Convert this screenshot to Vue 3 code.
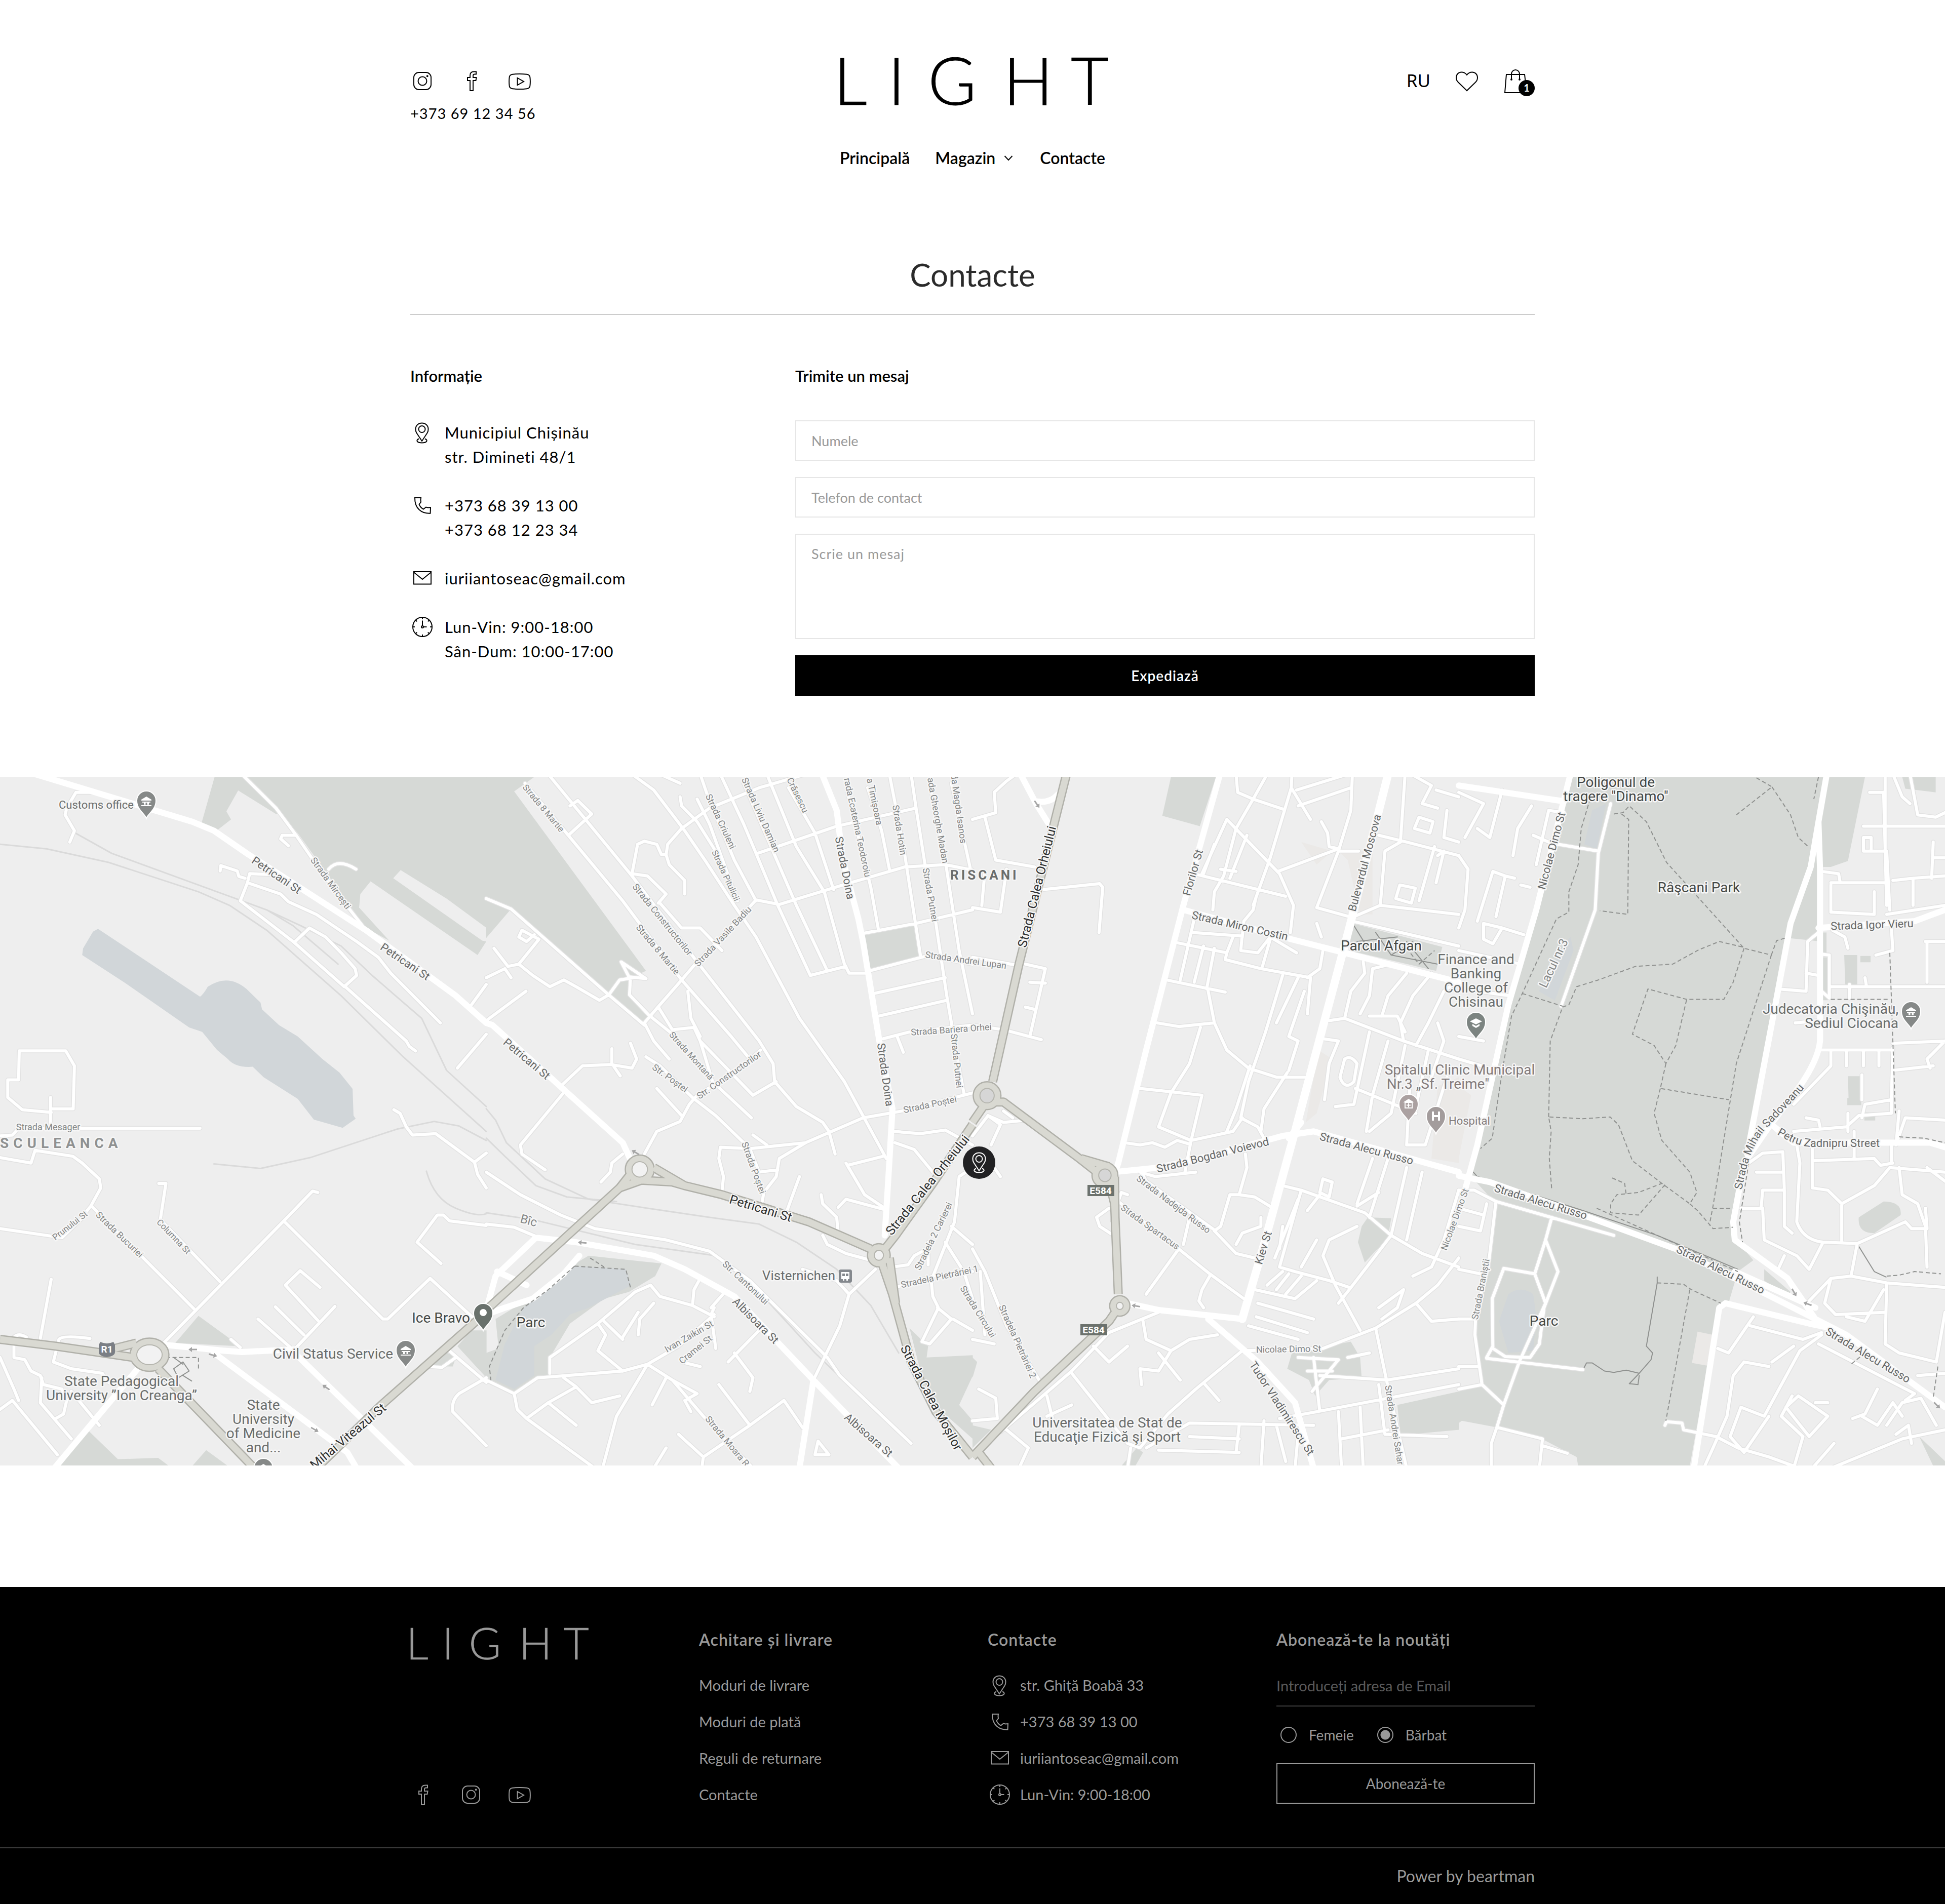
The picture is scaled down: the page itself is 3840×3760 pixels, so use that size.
<script setup>
import { ref } from 'vue'

const name = ref('')
const phone = ref('')
const message = ref('')
const email = ref('')
const gender = ref('m')

const icons = {
  instagram: '<rect x="7" y="7" width="34" height="34" rx="10"/><circle cx="24" cy="24" r="8.5"/><circle cx="33.7" cy="14.3" r="1" />',
  facebook: '<path d="M34 5.5V10.5H31C29 10.5 28 11.5 28 13.5V17H34.5L33.5 23H28V43H22V23H17V17H22V13C22 8 25 5.5 29.5 5.5Z"/>',
  youtube: '<path d="M10 10.8Q24 9 38 10.8Q43.5 11.5 44.3 16Q45.5 25 44.3 34Q43.5 38.5 38 39.2Q24 41 10 39.2Q4.5 38.5 3.7 34Q2.5 25 3.7 16Q4.5 11.5 10 10.8ZM19.5 18V32L32 25Z"/>',
  heart: '<path d="M24 12C27 8 31 6.5 34.5 6.5C41 6.5 45 11.5 45 17.5C45 21.5 43.5 24 41 26.5L24 43L7 26.5C4.5 24 3 21.5 3 17.5C3 11.5 7 6.5 13.5 6.5C17 6.5 21 8 24 12Z"/>',
  bag: '<path d="M6 11H42L46 47H3Z"/><path d="M16 21V10a8 8 0 0 1 16 0V21"/><circle cx="16" cy="21" r="1"/><circle cx="32" cy="21" r="1"/>',
  pin: '<path d="M23 41L12.5 25C10.5 22 10.5 19 10.5 17.5C10.5 10 16 5.5 23 5.5S35.5 10 35.5 17.5C35.5 19 35.5 22 33.5 25Z"/><circle cx="23" cy="17.5" r="6.5"/><path d="M17 36.500C10 39.500 13.500 44.500 23 44.500S36 39.500 29 36.500"/>',
  phone: '<path d="M9 9H21L20.500 13L21 17.500L17.500 22C18.500 25.500 22.500 30 26 31.500L31 27.500L35 28.500L40 28L39.500 39.800C22 40.500 8.500 30 9 9Z"/>',
  mail: '<path d="M7 11H41V35.500H7Z"/><path d="M7.500 12.500L24 26L40.500 12.500"/>',
  clock: '<circle cx="24" cy="24" r="19"/><circle cx="24" cy="24" r="2"/><path d="M24 22V11.500M26 24H32.500M24 5V9M24 39V43M5 24H9M39 24H43M11 11L13.200 13.200M37 11L34.800 13.200M11 37L13.200 34.800M37 37L34.800 34.800"/>',
}

const headerSocial = [
  { icon: 'instagram', label: 'Instagram' },
  { icon: 'facebook', label: 'Facebook' },
  { icon: 'youtube', label: 'YouTube' },
]
const footerSocial = [headerSocial[1], headerSocial[0], headerSocial[2]]

const info = [
  { icon: 'pin', lines: ['Municipiul Chișinău', 'str. Dimineti 48/1'] },
  { icon: 'phone', lines: ['+373 68 39 13 00', '+373 68 12 23 34'] },
  { icon: 'mail', lines: ['iuriiantoseac@gmail.com'] },
  { icon: 'clock', lines: ['Lun-Vin: 9:00-18:00', 'Sân-Dum: 10:00-17:00'] },
]
const footerLinks = ['Moduri de livrare', 'Moduri de plată', 'Reguli de returnare', 'Contacte']
const footerInfo = [
  { icon: 'pin', text: 'str. Ghiță Boabă 33' },
  { icon: 'phone', text: '+373 68 39 13 00' },
  { icon: 'mail', text: 'iuriiantoseac@gmail.com' },
  { icon: 'clock', text: 'Lun-Vin: 9:00-18:00' },
]

/* The map is split in four sheets of 960 units, each with its own drawing grid. */
const SX = 0.61224
const SY = 0.89286
const TOP = -14
const sheetTransform = (i) => `translate(${i * 960} ${TOP}) scale(${SX} ${SY})`

const sheets = [
  {
    park: 'M692 16L650 118L700 134L745 110L730 92L768 46L890 98L905 95L800 16ZM800 16L960 140L1180 350L1255 378L1158 305L1162 275L1195 247L1540 410L1568 380L1555 378L1268 240L1292 222L1440 285L1569 350V16ZM640 1208L565 1268L775 1275ZM285 1462L195 1540H545L510 1522L380 1525ZM665 1505L620 1540H735ZM1475 1275L1569 1345V1240L1520 1240ZM1380 1320L1460 1320L1470 1300L1430 1285Z',
    light: '',
    water: 'M316 352L645 502Q655 498 670 480Q735 450 795 485L840 515L845 530L900 565L960 590L1040 640L1095 670L1137 706L1140 765L1147 772L1105 792L1012 774L960 728L850 680L815 657Q760 660 735 640L700 620L652 580L610 570L400 470L265 410L268 395L300 358Z',
    rail: 'M0 165L150 175L350 205L640 270L740 300L860 355L1100 500L1300 635L1568 800M235 137L360 185L700 270L860 310L970 345L1100 390L1200 455L1360 550L1440 665L1568 745M860 310L945 345L1090 430M690 872L840 882L1000 858L1280 795L1400 778L1480 788L1568 820M1375 888Q1400 950 1470 970T1568 982',
    minor: 'M300 50H245L215 85L210 100L240 135L225 160M710 224L712 212L765 224L770 236L790 240M880 232L805 230L798 250L775 290L945 380L1110 480L1150 455L1145 440L1100 405L1050 370L998 350L952 380M798 250L905 275L930 292L1020 320L1150 380L1220 415L1260 450L1420 560M1110 478L1310 600L1320 612L1340 622M780 10L890 85L955 145L1000 190L1100 285L1180 355M955 145H910L905 153L930 168M1060 220Q1090 195 1148 220M1475 660L1568 585M1515 525L1568 475M62 622H212L240 655L236 750H165M62 622L60 686H25V725L72 752L165 758M163 725V785M0 810L40 808L60 793H645M0 858L100 870L113 842L235 855L265 870L320 905L325 925L293 965L275 980M295 965L625 1192M0 1015L200 1035L275 985M512 915H535L517 995L709 1132M1025 935L1008 932L915 998L525 1270M915 998L1235 1215L1250 1215L1387 1125L1530 1215M832 1215L940 1280M888 1188L980 1250M1080 1187L955 1278M1032 1145L968 1108L920 1140L1025 1218M1422 1092L1345 1045L1410 985L1430 985L1450 998L1568 1008M1270 752L1290 760L1310 790L1330 808L1405 805L1530 868L1568 848M1530 868L1540 895L1568 925M1440 1280L1568 1355M1568 1345L1480 1380Q1455 1395 1460 1420L1568 1495M1380 1320L1425 1322L1470 1300M165 1127L130 1258M45 1255Q60 1245 85 1255M45 1260V1300L80 1305L100 1330L130 1340L140 1360L200 1370L215 1395L205 1425L180 1435M135 1345L130 1400L230 1480M190 1260Q200 1250 290 1258M190 1260L172 1310L230 1325L330 1335L350 1355M0 1300L45 1370L60 1395M0 1415L40 1395L185 1515M230 1375L320 1450M745 1260L775 1278',
    major: 'M90 5L620 115L690 135L800 187L1180 355L1470 500L1568 560M530 1272L720 1285L780 1288L950 1282M690 1290L1120 1510L1150 1545M950 1290L1330 1545M450 1320L175 1545',
    avenue: '',
    highway: 'M0 1260L180 1275L430 1300M370 1280L440 1268M510 1325L820 1545M1568 1200L1230 1405L1020 1545',
    rings: [{ x: 482, y: 1294, rx: 50, ry: 28, open: true }],
    dash: 'M535 1300H640V1330',
    path: 'M560 1325L590 1310L610 1330L575 1345ZM560 1300L590 1315M590 1340L618 1352',
  },
  {
    park: 'M0 16H155L90 48L515 445L460 462L465 500L525 543L505 565L80 308L0 372ZM1215 367L1385 343L1402 415L1238 442ZM330 1075L565 1092L545 1120L460 1155L380 1170L270 1225L205 1300V1345L155 1345L95 1380L0 1350V1290L40 1280L30 1215L90 1190L130 1180L280 1095ZM1365 1235L1425 1275L1420 1300L1569 1295V1340L1525 1405L1569 1440V1480L1470 1420L1400 1330Z',
    light: '',
    water: 'M285 1098L450 1105L468 1140L330 1190L270 1205L210 1250L155 1275V1340L90 1370L30 1350L60 1270L120 1190L180 1160L240 1130Z',
    rail: 'M0 750L30 775L65 825L190 905L330 950L520 970L720 990L880 1005L1000 1045L1130 1105L1240 1185L1330 1290M0 815L60 855L160 920L260 945L420 955M0 980L150 995L480 1050L740 1075L860 1140L1060 1290L1350 1480',
    minor: 'M125 30L440 290L630 465L790 590L850 640M200 10L470 235L680 425L880 600L925 650L930 690L1000 745L1085 780L1105 800L1125 850M470 10L540 45L640 135L710 205L800 300L870 370L1010 550L1155 690L1290 860M560 10L625 30M625 60L630 80L680 115L735 175M680 65L720 120L810 290M690 10L715 60L800 200L870 290M755 10L830 120L870 185L940 300L1045 455M830 30L1000 300L1100 445M905 10L1000 170L1090 270L1155 430L1170 450L1225 450M975 40L1060 140L1120 265M470 230L488 165L510 158L550 165L565 188L580 188L585 165L630 130L720 85L880 40L1020 12M580 188L590 210L640 245V275M470 230L520 235L580 275L555 295M560 295L630 350L690 350L760 400M875 185L1130 125L1385 85M510 560L560 520L630 465L680 425L800 340L870 288L945 298L1150 255L1350 215L1480 210L1568 222M1045 455L1160 435M1215 362L1385 340L1568 310M1235 445L1420 412L1568 430M1250 495L1480 460M1265 545L1485 510M1280 595L1365 580L1568 565M1325 590L1345 625M1165 50L1190 120L1240 260L1265 355M1230 40L1275 135L1300 220M1300 10L1320 80L1350 190L1400 410M1370 10L1385 80L1415 210L1450 340L1485 500L1520 640L1540 715M1430 30L1480 200L1525 400L1568 540M1500 30L1568 240M1568 715L1340 755L1215 770L1030 825L850 838L755 835L750 860L765 900L760 935M860 808L905 830M515 635L560 655L665 725L740 765L850 838M550 705L630 765M510 850L550 800L625 778L655 740L680 720L800 670L885 620M850 838L880 890L940 885M1030 825L945 860L935 900L895 935L890 955M510 560L540 600L590 640M555 525L600 575L670 570L690 600L860 720L935 690M650 490L660 550L690 590M690 600L730 690L855 770M0 285L80 308L395 498L510 565M395 498L430 465L475 460M465 462L462 498L525 543L610 590M435 425L515 462L460 458ZM395 498L365 510L290 480L250 465L205 480L150 455L105 430L170 375M105 430L70 435L25 395M170 375L115 355L105 370L130 380L155 365M0 460L60 440L80 460M0 555L128 490M240 700L310 655L400 652L470 660L485 640L465 605M405 617V650L432 677M255 710L110 830L115 850L190 885M370 912L400 890L405 870L440 850M265 145L340 98L295 68L270 80M1010 900L970 975M1080 940L1085 960L1130 990L1135 1025M1085 1030L1100 1050L1160 1070L1240 1085M1135 968L1160 950L1280 972M1165 875L1280 855M1160 870L1220 940L1285 970M1315 800L1400 805L1480 797L1568 830M1318 825L1380 840L1440 890M1310 1100L1360 1095L1380 1075L1420 1060M1568 880L1525 900L1510 1000L1435 1130L1440 1165L1458 1190L1405 1265L1430 1270L1500 1215L1455 1190M1425 1045V1095M1320 1145L1440 1120L1568 1110M1500 1010L1568 1050M1480 1045L1540 1110L1568 1170M1505 1215L1568 1240M0 890L110 940L240 985L350 1015L580 1040L720 1065L850 1130L1100 1300L1140 1340L1370 1490M0 1005L90 1012L170 1035M1255 1105L1170 1160L1140 1230L1055 1350M1170 1160L1130 1130L1020 1105M0 1350L90 1380L165 1345L350 1335L440 1330L520 1315L600 1350L700 1430L860 1545M520 1315L420 1430L375 1545M520 1315L620 1275L735 1205M205 1335V1300L360 1225L480 1155L530 1140L560 1165L665 1185L735 1210M360 1225L385 1250L360 1285L440 1330M90 1380L100 1415L130 1435L200 1400L290 1365L340 1400L430 1385M130 1435L350 1545M200 1400L290 1450M250 1345L290 1365M440 1255L490 1200M490 1250L495 1215L540 1180M380 1220L440 1260M665 1185L670 1150L690 1125M735 1190L725 1205L740 1280M770 1155L725 1190M535 1405L580 1345M600 1350L680 1380L640 1395L660 1420M690 1320L630 1310M780 1310L880 1240M800 1290L860 1345L850 1375M750 1360L850 1450L960 1395L1020 1455M850 1450L700 1520L695 1545M620 1470L700 1520M580 1500L540 1545M1060 1515L1070 1485L1105 1515Z',
    major: 'M0 560L20 565L440 825L470 870M1080 5L1130 90L1150 200L1200 330L1215 380L1270 610L1310 750L1297 900L1285 1030M0 1205L60 1190L150 1170L250 1115L300 1075M160 1035L290 1045L540 1075L640 1105L800 1165L1055 1350L1330 1545M1055 1350L1010 1545M0 1195L30 1120L160 1035M35 1110L130 1140',
    avenue: '',
    highway: 'M1568 785L1440 915L1320 1030L1268 1075M0 1195L430 925L470 890M540 880L640 920L760 940L1040 1000L1190 1045L1240 1060M430 925L500 908L600 912L640 920M1268 1075L1310 1160L1370 1310L1450 1420L1568 1520M1300 1080L1320 1180',
    rings: [{ x: 495, y: 884, rx: 34, ry: 23, open: true }, { x: 1266, y: 1074, rx: 24, ry: 17, open: true }],
    dash: 'M285 1098L450 1105L465 1145M285 1098L200 1150L120 1190L60 1240L10 1320L15 1350M335 1080L380 1100',
    path: '',
  },
  {
    park: 'M640 16L612 102L733 125L785 16ZM1225 340L1420 375L1515 392L1495 445L1215 400ZM1255 1010L1275 990L1350 992L1340 1035L1265 1090L1243 1045ZM1030 1290L1220 1265L1250 1300L1255 1345L1150 1350L1105 1385L1085 1350L1015 1325ZM1370 1405L1569 1375V1460L1380 1472ZM0 1300L15 1310L0 1345ZM0 1450L60 1460L0 1500ZM530 1500L480 1540H525L550 1510Z',
    light: 'M1180 180L1290 180L1290 320L1250 320L1210 200ZM1115 620L1160 640L1110 760L1075 780ZM1500 700L1568 680V870L1480 860ZM1060 160L1160 180L1110 210Z',
    water: '',
    rail: '',
    minor: 'M0 110L75 95L70 50L110 25L140 10M40 105L75 200L200 215M0 305L90 315L110 220M40 225L30 300M230 265L410 252L420 260L408 360M170 430L235 440L185 590M185 470L235 472M170 525L200 530M0 565L100 575L222 597M0 415L140 432M0 810L50 765L100 780L175 775M50 765L90 785L60 830M60 870L90 900M100 755L130 770M820 110L990 230L1035 300L1025 360M820 110L740 230M780 165L745 230M885 145L830 240M725 232L1010 280M800 220L850 225M850 10L855 50L905 65L1005 88M950 10L905 65L850 130L810 235L780 270L775 310M1030 10L1028 40L960 195L905 300M1028 40L1090 110M1045 45L1200 12M1225 10L1220 90L1180 180L1245 180M1050 80L1220 40M985 225L1180 175L1150 170L1145 140L1125 115M1180 180L1110 305L1215 325M1310 145L1400 160L1568 190M1395 10L1380 160L1330 180L1315 300L1230 325M1315 300L1568 320M1415 10L1480 35L1450 75L1500 85M1440 105L1485 115L1475 140L1425 130ZM1378 255L1428 262L1415 295L1365 285ZM1495 45L1568 60M1530 90L1520 150L1568 160M1490 170L1440 290M1500 190L1520 180L1495 250M1225 335L1568 390M715 330L670 465M655 382L820 405M745 390L715 470M780 395L755 485M710 360L870 368M870 365L865 400L920 405L960 370L1045 405M820 405L840 370M960 375L935 435M915 280L905 310L875 335L870 370M625 465L815 492M820 405L815 420L930 440L1090 460L1080 540M1000 455L945 580L890 690L865 770L920 790L940 815M760 490L780 560L820 620L890 660L980 680L1075 680M595 560L665 568L780 560M735 570L700 650L640 715L600 790L705 820L840 800L870 770M540 705L740 720L705 820L685 890M895 655L850 750L820 800M1015 670L940 750L930 800M1070 490L1020 590L1050 600L1020 665M1050 460L980 560M1110 340L1125 370M1130 400L1120 440L1080 460M490 825L540 830L580 825L620 835L660 820L700 828M540 890L590 900L720 890M880 850L885 880L860 940L910 945L970 970M860 940L830 940L800 1010L780 1020L850 1070L910 1080M850 1050L870 1025L930 1010L930 990M470 955L665 1060L765 1115L875 1170M665 1060L560 1160M700 990L680 1050M470 955L480 935L500 940M440 970L400 990L410 1010L455 1030M765 1120L740 1150L730 1175L745 1190M545 890L560 910L780 1018M1150 555L1200 550L1390 600L1568 640M1200 550L1220 490L1265 450L1260 425M1250 540L1280 500L1290 440L1350 430M1320 545L1340 500L1400 450M1390 600L1380 560L1420 500L1480 450M1430 610L1470 560L1520 490L1560 470M1280 545L1370 545L1395 580M1130 595L1180 600L1150 650L1135 730M1200 640Q1220 630 1240 650L1230 690Q1200 710 1185 680ZM1280 580L1230 740L1170 745M1235 705L1430 760M1340 600L1290 720L1270 800M1395 610L1350 760L1280 800M1470 620L1425 760M1410 700L1400 830L1460 830L1530 680M1500 560L1520 600L1470 700M1000 920L1060 930L1265 980L1350 1030L1450 1070L1568 1100M1130 905L1160 912L1150 945L1120 935ZM1080 975L1120 940M1240 960L1290 860M1350 1030L1400 880M1450 890L1400 1040M1340 860L1280 990M1060 930L990 1100L1040 1110L1150 1130L1215 1145M1240 1010L1150 1040L1130 1075L1170 1140L1250 1240M1350 1030L1215 1150L1180 1180M910 1150L1040 1170L1110 1130M920 1180L1100 1215M915 1210L1080 1245M890 1230L1050 1260M880 1285L1130 1280L1300 1235L1430 1180L1500 1140L1568 1080M1430 1180L1480 1220L1568 1215M1000 1110L950 1140M1020 1115L980 1150M1060 1120L1010 1160M1110 1040L1060 1100M1000 1010L990 1060M1050 950L975 1080M1310 935L1240 965M1420 1120L1480 1100L1520 1040L1568 930M1310 1190L1390 1150L1370 1190L1320 1215M1300 1235L1335 1350L1400 1545M1120 1340L1335 1350L1568 1325M990 1435L1110 1420L1340 1390L1568 1360M1100 1300L1120 1420M1080 1330L1160 1330M1210 1300L1280 1290M1050 1300L1180 1305L1095 1375M320 1335L500 1490L540 1500L630 1425L720 1370L870 1285M90 1465L320 1330L440 1245L600 1200M240 1385L260 1440M390 1275L440 1310L500 1275M550 1220L560 1260L640 1285L700 1260L790 1250M640 1285L600 1330L540 1325L545 1360M600 1290L670 1350M240 1430L320 1405M110 1460L180 1500L150 1545M750 1360L795 1395M510 1500L500 1545M560 1500L700 1445L1100 1450M700 1475L860 1480M860 1450L850 1510M600 1505L860 1510M940 1440L930 1545M980 1450L1010 1530M1050 1470L1040 1545M1180 1420L1190 1545M1250 1410L1260 1545M1190 1480L1340 1460M1310 1360L1330 1470L1530 1475M20 1370L75 1390L80 1435L0 1440M0 1060L40 1110L110 1230L215 1350M25 1110L40 1250M0 1260L70 1270',
    major: 'M800 5L680 300L560 620L470 870L460 890M455 890L600 880L760 855L1000 810L1100 800L1568 890M680 310L1000 370L1200 405L1568 470M500 1180L600 1195L870 1215M760 1215L920 1310L1040 1400L1100 1545M155 10L205 75L255 130M205 70Q250 75 275 55M1020 815L1060 780',
    avenue: 'M1342 5L1215 350L1040 800L940 1050L870 1215',
    highway: 'M305 5L150 430L65 690M60 735L100 735L345 860L410 895M440 910L458 960L470 1160M460 1200L440 1220L200 1375L0 1520M40 740L0 780M20 1510L60 1545M350 860L440 878M458 900L460 1000',
    rings: [{ x: 47, y: 721, rx: 32, ry: 22 }, { x: 427, y: 897, rx: 29, ry: 20 }, { x: 475, y: 1186, rx: 20, ry: 14, open: true }],
    dash: 'M1400 395L1440 430L1490 400',
    path: 'M1230 345L1280 400M1240 380L1370 370M1300 360L1350 410L1420 380M1400 380L1470 440M1350 410L1500 430',
  },
  {
    park: 'M365 16L1310 16L1255 202L1200 215L1175 215L1168 380L1060 372L950 800L885 1000L895 1040L950 1085L900 1110L870 1180L840 1180L745 1540H385L380 1520L240 1470L125 1455L10 1440L0 1445V1375L75 1360L50 1240L120 960L40 900L170 520ZM1168 360h18v45h-18ZM1168 415h22v95h-18ZM1243 410h42v75h-38ZM1295 412h33v14h-33ZM1255 678h40v48h-38ZM1253 726h45v16h-45ZM1308 758h35v18h-35ZM1290 990L1370 955Q1430 955 1425 985L1340 1025Q1285 1025 1290 990ZM1430 16H1538V50L1440 42ZM1485 1475L1569 1530V1540H1530ZM985 1105L1070 1155L1060 1165L985 1130Z',
    light: 'M770 1243L820 1250L800 1318L752 1312ZM0 700L40 720L0 860Z',
    water: 'M430 90L475 75L445 175L405 165ZM335 390L360 370L370 400L310 510L258 490ZM160 1160Q200 1140 240 1160L250 1210L240 1285L160 1290L130 1220Z',
    rail: '',
    minor: 'M490 75L450 185L440 310L330 523M320 165L450 180M120 955L95 1100L55 1200L52 1250L75 1360L145 1405L125 1450L105 1490V1545M0 1370L75 1360M0 930L50 930L120 955L500 1030M300 990L280 1040L245 1115L145 1103L108 1170L110 1280L150 1298L230 1300L260 1270L275 1190L320 1110L280 1040M245 1115L280 1180L195 1310L145 1405M90 1302L400 1327M110 1275L90 1300M125 1455L270 1480L260 1545M270 1495L350 1512M665 1450L670 1442L720 1445L725 1460L830 1475M0 50L80 75L20 150M235 80L190 130L175 190M140 45L100 150L60 130M0 190L30 220L20 310L0 350M60 335L110 225L150 235L120 325M150 235L180 240M200 255L230 260M80 340L140 350L110 385L80 375ZM140 350L210 365M240 145L290 160M250 210L290 90L340 95M0 400L200 430M165 500L60 490M0 590L80 600M0 640L100 660M0 1010L70 1020L90 960M0 970L80 985M0 1105L70 1115M0 1215H50M0 1320L65 1320M1200 250H1385M1170 225L1225 230L1230 250M1200 255V315L1340 320V270M1325 50H1370L1380 300M1305 125L1568 125M1375 10V180L1305 180V150H1330V175M1380 180L1390 310M1380 320L1568 300M1400 245L1465 240V300M1465 240L1568 235M1530 160L1525 240M1455 10L1480 100L1538 105L1568 95M1400 10L1430 60L1455 75M1530 195H1568M1030 485L1120 490L1125 380L1160 360M1120 450L1160 455M1085 560L1160 555M1170 490L1195 505V410L1170 408M1200 480H1568M1505 380H1568M1510 380V470M1395 350L1400 400L1345 410M1205 355L1245 370L1255 395M1260 475V505M1310 460L1315 480M1165 620L1400 620M1400 605L1568 600M1200 625V655L1080 740M1250 625V655M1305 622V655M1355 620V655M1400 615L1395 730L1310 740L1300 770M1300 675V730M1255 760V800M1400 665L1530 655M1568 600L1510 640L1520 660M1080 800L1250 790L1290 765L1395 760V720M1120 770L1160 775L1165 790M1275 800V860M1395 830V870M1420 755L1410 830L1440 770L1568 775M910 970H980L985 1040L1090 1075L1130 1105L1175 1045M935 870L980 848L1045 845L1050 930L980 930M960 890H1045M980 930L975 970M1050 930V1010L1075 1025M1090 830L1100 870L1090 1000Q1110 1040 1175 1045L1285 1048L1440 1000L1460 1015L1510 1015L1505 970M1140 830V925L1190 930L1235 960L1340 920L1390 880L1568 890M1140 865L1340 860L1360 875L1400 870M1235 960V1045M1285 1048L1265 1120L1200 1125L1130 1175M1265 1120L1380 1135L1568 1145M1380 1135L1375 1270L1420 1290L1540 1310L1568 1200M1420 880L1430 940L1480 960L1505 1010L1510 1100M1200 1125L1180 1180L1215 1205L1375 1200M1510 880L1568 910M1050 1075L1030 1105M835 1280L870 1290L950 1210M940 1230L1110 1260L1170 1245M1160 1270L1470 1380L1440 1395M1170 1250L1100 1285L985 1430L910 1410L875 1475L920 1510L1000 1430M1010 1310L1080 1275M920 1310L885 1340L865 1430L820 1500L790 1545M920 1310L1000 1320M1055 1410L1095 1385L1190 1430L1130 1475ZM1075 1385L1040 1430L1110 1475L1080 1545M1190 1400L1150 1400M830 1475L900 1500L1000 1520L1100 1545M1270 1435L1310 1425L1350 1370M1300 1430L1350 1450L1400 1400L1430 1430M1380 1450L1430 1400L1490 1390L1540 1450M1410 1470L1450 1450L1460 1490M1200 1545L1430 1480L1568 1460M1140 1545L1210 1490M1250 1210L1310 1220L1370 1150M1480 1340L1568 1335',
    major: 'M362 5L250 310L160 520L60 830L20 930M0 898L100 912L400 985L700 1060L1050 1180L1250 1250L1568 1410M0 35L340 70M1188 5L1160 115L1135 215L1070 340L1010 560L930 850M1160 115L1165 220V600Q1160 640 1100 700L1000 790L920 870L885 1000L890 1040L1060 1125L1150 1215L1250 1250M1160 350L1470 335L1568 310M1000 780L1080 825L1400 825L1520 825L1568 835M758 1545L840 1190L860 1180L1130 1225L1200 1235M890 1110L1150 1190',
    avenue: '',
    highway: '',
    rings: [],
    dash: 'M500 98L530 95L550 80L605 115L670 205L920 395L1008 410M525 98L548 110L545 320L455 312M1008 410L895 650L820 965L808 1008M1008 410L1025 378L1055 372M920 395L885 470L855 508H735L610 485L560 585L630 610L668 650L700 610L735 508M668 650L650 705L872 730M650 705L630 760L655 820L745 890L768 935L745 960L655 915L560 865L515 785L488 768L400 772L290 768L298 800L292 860L300 930M290 768L295 600L335 525L355 520L380 480L450 465L570 435L690 430L775 398L840 380L920 393M205 495L335 523M430 50L395 130L385 210L355 270V315L315 330L205 495L170 545L135 690L108 815L70 838M895 100L1010 38L955 16M1010 38L1070 100L1095 150L1130 172M1160 16L1145 65M745 960L770 975L820 1015L885 1012M820 970H885M665 918L580 985L490 980V960L510 940L580 935L655 915M495 903L535 915L540 940M445 970L510 990L900 1110M640 1135L725 1138L750 1150L845 1180M745 1150L668 1440M935 870L905 1000L915 1045M1390 405L1408 760M1200 508H1390M1380 1120L1420 1118L1470 1110L1555 1115M1545 1320L1530 1390M1420 812L1500 815L1568 825M1310 1290L1265 1315',
    path: 'M40 885L60 900L400 975L640 1030L900 1105M640 1122V1135L605 1275L625 1290L620 1305L582 1335L540 1328L500 1333L470 1330L430 1312H412L400 1328M582 1335L550 1358L578 1360L582 1340M1288 1052L1340 1110L1378 1122',
  },
]

/* Street names: sheet, start and end of the line they follow, name, rank. */
const streets = [
  [0, 815, 198, 968, 268, 'Petricani St', 'mid'],
  [0, 1232, 390, 1382, 460, 'Petricani St', 'mid'],
  [0, 1008, 196, 1124, 306, 'Strada Mircești', 'soft'],
  [0, 62, 791, 248, 791, 'Strada Mesager', 'soft'],
  [0, 178, 1034, 274, 982, 'Prunului St', 'tiny'],
  [0, 314, 980, 458, 1076, 'Strada Bucuriei', 'soft'],
  [0, 514, 1000, 608, 1066, 'Columna St', 'tiny'],
  [0, 1008, 1540, 1235, 1408, 'Mihai Viteazul St', 'dark'],
  [1, 128, 38, 242, 132, 'Strada 8 Martie', 'tiny'],
  [1, 478, 254, 660, 408, 'Strada Constructorilor', 'soft'],
  [1, 490, 345, 618, 450, 'Strada 8 Martie', 'soft'],
  [1, 675, 432, 852, 304, 'Strada Vasile Badiu', 'soft'],
  [1, 714, 52, 798, 176, 'Strada Criuleni', 'soft'],
  [1, 736, 180, 808, 288, 'Strada Pitulicii', 'tiny'],
  [1, 832, 20, 938, 180, 'Strada Liviu Damian', 'soft'],
  [1, 978, 20, 1030, 92, 'Crăsescu', 'soft'],
  [1, 1136, 148, 1176, 286, 'Strada Doina', 'mid'],
  [1, 1164, 20, 1232, 236, 'rada Ecaterina Teodoroiu', 'soft'],
  [1, 1236, 20, 1268, 122, 'a Timișoara', 'soft'],
  [1, 1320, 78, 1346, 188, 'Strada Hotin', 'soft'],
  [1, 1434, 20, 1480, 204, 'ada Gheorghe Madan', 'soft'],
  [1, 1510, 20, 1538, 152, 'da Magda Isanos', 'soft'],
  [1, 1418, 218, 1448, 336, 'Strada Putnei', 'soft'],
  [1, 1418, 408, 1676, 434, 'Strada Andrei Lupan', 'soft'],
  [1, 1370, 580, 1630, 568, 'Strada Bariera Orhei', 'soft'],
  [1, 1508, 584, 1526, 704, 'Strada Putnei', 'soft'],
  [1, 1345, 752, 1516, 728, 'Strada Poștei', 'soft'],
  [1, 1272, 604, 1302, 744, 'Strada Doina', 'mid'],
  [1, 58, 598, 202, 680, 'Petricani St', 'mid'],
  [1, 538, 655, 648, 710, 'Str. Poștei', 'soft'],
  [1, 600, 586, 724, 680, 'Strada Montană', 'tiny'],
  [1, 680, 724, 884, 626, 'Str. Constructorilor', 'soft'],
  [1, 836, 830, 890, 930, 'Strada Poștei', 'soft'],
  [1, 784, 948, 988, 992, 'Petricani St', 'dark'],
  [1, 1288, 1030, 1556, 806, 'Strada Calea Orheiului', 'dark'],
  [1, 110, 992, 164, 1002, 'Bîc', 'river'],
  [1, 766, 1088, 908, 1180, 'Str. Cantonului', 'soft'],
  [1, 798, 1170, 940, 1268, 'Albisoara St', 'mid'],
  [1, 1158, 1428, 1308, 1516, 'Albisoara St', 'mid'],
  [1, 576, 1284, 732, 1222, 'Ivan Zaikin St', 'soft'],
  [1, 628, 1308, 722, 1256, 'Cramei St', 'soft'],
  [1, 1342, 1270, 1530, 1508, 'Strada Calea Moșilor', 'dark'],
  [1, 714, 1432, 842, 1538, 'Strada Moara R', 'soft'],
  [1, 1394, 1102, 1492, 962, 'Stradela 2 Carierei', 'soft'],
  [1, 1342, 1138, 1582, 1104, 'Stradela Pietrăriei 1', 'soft'],
  [1, 1534, 1142, 1638, 1254, 'Strada Circului', 'soft'],
  [2, 92, 1184, 198, 1346, 'Stradela Pietrăriei 2', 'soft'],
  [2, 158, 398, 258, 120, 'Strada Calea Orheiului', 'dark'],
  [2, 688, 278, 732, 176, 'Florilor St', 'mid'],
  [2, 708, 320, 1016, 370, 'Strada Miron Costin', 'mid'],
  [2, 1224, 314, 1306, 98, 'Bulevardul Moscova', 'mid'],
  [2, 594, 884, 956, 820, 'Strada Bogdan Voievod', 'mid'],
  [2, 1120, 810, 1422, 866, 'Strada Alecu Russo', 'mid'],
  [2, 546, 908, 752, 1014, 'Strada Nadejda Russo', 'soft'],
  [2, 484, 966, 664, 1056, 'Strada Spartacus', 'soft'],
  [2, 922, 1094, 954, 1020, 'Kiev St', 'mid'],
  [2, 1520, 1060, 1590, 928, 'Nicolae Dimo St', 'soft'],
  [2, 914, 1282, 1124, 1280, 'Nicolae Dimo St', 'soft'],
  [2, 904, 1314, 1092, 1510, 'Tudor Vladimirescu St', 'mid'],
  [2, 1340, 1362, 1380, 1536, 'Strada Andrei Sahar', 'soft'],
  [3, 266, 264, 332, 94, 'Nicolae Dimo St', 'mid'],
  [3, 266, 488, 346, 368, 'Lacul nr.3', 'river'],
  [3, 116, 924, 414, 986, 'Strada Alecu Russo', 'mid'],
  [3, 704, 1058, 984, 1152, 'Strada Alecu Russo', 'mid'],
  [3, 1186, 1240, 1452, 1350, 'Strada Alecu Russo', 'mid'],
  [3, 52, 1216, 90, 1082, 'Strada Braniștii', 'soft'],
  [3, 1198, 345, 1468, 340, 'Strada Igor Vieru', 'mid'],
].map(([s, x1, y1, x2, y2, text, rank]) => {
  const dx = (x2 - x1) * SX
  const dy = (y2 - y1) * SY
  const x = Math.round(s * 960 + ((x1 + x2) / 2) * SX)
  const y = Math.round(TOP + ((y1 + y2) / 2) * SY)
  const angle = Math.round((Math.atan2(dy, dx) * 180) / Math.PI)
  return { text, rank, transform: `translate(${x} ${y}) rotate(${angle})` }
})

/* Places: x, baseline of the first line, lines, anchor, class. */
const places = [
  [264, 63, ['Customs office'], 'end', 'place small'],
  [776, 1149, ['Civil Status Service'], 'end', 'place'],
  [240, 1203, ['State Pedagogical', 'University ”Ion Creanga”'], 'middle', 'place'],
  [520, 1250, ['State', 'University', 'of Medicine', 'and...'], 'middle', 'place'],
  [928, 1078, ['Ice Bravo'], 'end', 'place bold'],
  [1048, 1087, ['Parc'], 'middle', 'place bold'],
  [1649, 994, ['Visternichen'], 'end', 'place station'],
  [2186, 1285, ['Universitatea de Stat de', 'Educaţie Fizică şi Sport'], 'middle', 'place'],
  [2727, 343, ['Parcul Afgan'], 'middle', 'place bold'],
  [2914, 370, ['Finance and', 'Banking', 'College of', 'Chisinau'], 'middle', 'place'],
  [2882, 588, ['Spitalul Clinic Municipal'], 'middle', 'place rose'],
  [2839, 616, ['Nr.3 „Sf. Treime"'], 'middle', 'place rose'],
  [2860, 687, ['Hospital'], 'start', 'place rose small'],
  [3190, 20, ['Poligonul de', 'tragere "Dinamo"'], 'middle', 'place bold'],
  [3354, 228, ['Râşcani Park'], 'middle', 'place bold'],
  [3748, 468, ['Judecatoria Chişinău,', 'Sediul Ciocana'], 'end', 'place'],
  [3048, 1084, ['Parc'], 'middle', 'place bold'],
].map(([x, y, lines, anchor, cls]) => ({ x, y, lines, anchor, cls }))

const museum = 'M-10 -37L0 -43L10 -37V-35H-10ZM-8 -33H8V-31H5V-27H1.500V-31H-1.500V-27H-5V-31H-8ZM-10 -26H10V-24H-10Z'
const pins = [
  { x: 289, y: 82, fill: '#868988', glyph: museum },
  { x: 801, y: 1167, fill: '#868988', glyph: museum },
  { x: 520, y: 1400, fill: '#868988', glyph: museum },
  { x: 3773, y: 498, fill: '#868988', glyph: museum },
  { x: 954, y: 1094, fill: '#69716c', glyph: 'M0 -43a7 7 0 1 1 0 14a7 7 0 1 1 0 -14Z' },
  { x: 2914, y: 519, fill: '#7c8481', glyph: 'M-12 -36L0 -42L12 -36L0 -30ZM-7 -31L0 -27L7 -31V-27L0 -23L-7 -27Z' },
  { x: 2781, y: 681, fill: '#aba1a1', glyph: 'M0 -45L11 -38H8V-26H-8V-38H-11ZM-6 -37V-28H6V-37ZM-1 -36.500H1V-33.500H4V-31.500H1V-28.500H-1V-31.500H-4V-33.500H-1Z' },
  { x: 2835, y: 705, fill: '#a39c9c', glyph: 'M-8 -44H-4V-37H4V-44H8V-26H4V-33H-4V-26H-8Z' },
]
const arrows = [
  [381, 1131, 180], [420, 1142, 15], [644, 1206, 215], [621, 1289, 30],
  [1150, 920, 185], [1255, 742, 210], [2047, 54, 55], [2243, 1045, 190],
  [3542, 1018, 60], [3569, 1041, 200], [3824, 1241, 45],
]
</script>

<template>
  <div class="page">
    <header class="wrap header">
      <div class="header-left">
        <div class="social">
          <a v-for="s in headerSocial" :key="s.icon" href="#" :aria-label="s.label">
            <svg class="icon" viewBox="0 0 48 48" v-html="icons[s.icon]"></svg>
          </a>
        </div>
        <a class="tel" href="tel:+37369123456">+373 69 12 34 56</a>
      </div>

      <div class="header-center">
        <a href="#" class="logo" aria-label="Light">
          <svg viewBox="0 0 524 96"><text x="-12 95 174 323 456" y="95">LIGHT</text></svg>
        </a>
        <nav class="nav">
          <a href="#">Principală</a>
          <button type="button">
            Magazin
            <svg class="chevron" viewBox="0 0 24 24"><path d="M4.500 8L12 16L19.500 8" /></svg>
          </button>
          <a href="#">Contacte</a>
        </nav>
      </div>

      <div class="header-right">
        <a href="#" class="lang">RU</a>
        <a href="#" aria-label="Favorite"><svg class="icon" viewBox="0 0 48 48" v-html="icons.heart"></svg></a>
        <a href="#" class="cart" aria-label="Coș">
          <svg class="icon" viewBox="0 0 48 48" v-html="icons.bag"></svg>
          <span class="badge">1</span>
        </a>
      </div>
    </header>

    <main>
      <div class="wrap">
        <h1>Contacte</h1>
        <div class="contact">
          <section>
            <h2>Informație</h2>
            <ul class="info">
              <li v-for="row in info" :key="row.icon">
                <svg class="icon" viewBox="0 0 48 48" v-html="icons[row.icon]"></svg>
                <p><span v-for="line in row.lines" :key="line">{{ line }}</span></p>
              </li>
            </ul>
          </section>
          <section>
            <h2>Trimite un mesaj</h2>
            <form class="form" @submit.prevent>
              <input v-model="name" type="text" placeholder="Numele" aria-label="Numele" />
              <input v-model="phone" type="tel" placeholder="Telefon de contact" aria-label="Telefon de contact" />
              <textarea v-model="message" placeholder="Scrie un mesaj" aria-label="Scrie un mesaj"></textarea>
              <button type="submit">Expediază</button>
            </form>
          </section>
        </div>
      </div>

      <svg class="map" viewBox="0 0 3840 1360" preserveAspectRatio="xMidYMid slice" role="img" aria-label="Harta">
        <defs>
          <path id="sadoveanu" d="M3439 816C3449 760 3462 722 3488 694S3540 642 3566 610" />
          <path id="zadnipru" d="M3508 706C3530 718 3548 730 3580 731H3730" />
        </defs>
        <rect class="land" width="3840" height="1360" />
        <g v-for="(s, i) in sheets" :key="'a' + i" :transform="sheetTransform(i)">
          <path class="park" :d="s.park" />
          <path v-if="s.light" class="light" :d="s.light" />
          <path class="water" :d="s.water" />
        </g>
        <g v-for="(s, i) in sheets" :key="'b' + i" :transform="sheetTransform(i)" class="lines">
          <path class="rail" :d="s.rail" />
          <path class="path" :d="s.path" />
          <path class="minor-case" :d="s.minor" />
        </g>
        <g v-for="(s, i) in sheets" :key="'c' + i" :transform="sheetTransform(i)" class="lines">
          <path class="minor" :d="s.minor" />
          <path class="major" :d="s.major" />
          <path class="avenue" :d="s.avenue" />
          <path class="dash" :d="s.dash" />
        </g>
        <g v-for="(s, i) in sheets" :key="'d' + i" :transform="sheetTransform(i)" class="lines">
          <path class="highway-case" :d="s.highway" />
          <ellipse v-for="r in s.rings" :key="r.x" class="highway-case" :cx="r.x" :cy="r.y" :rx="r.rx" :ry="r.ry" />
        </g>
        <g v-for="(s, i) in sheets" :key="'e' + i" :transform="sheetTransform(i)" class="lines">
          <path class="highway" :d="s.highway" />
          <template v-for="r in s.rings" :key="r.x">
            <ellipse class="highway" :cx="r.x" :cy="r.y" :rx="r.rx" :ry="r.ry" />
            <ellipse class="island" :class="{ open: r.open }" :cx="r.x" :cy="r.y" :rx="r.rx - 9" :ry="r.ry - 6" />
          </template>
        </g>
        <path v-for="(a, i) in arrows" :key="'f' + i" class="arrow" d="M-8 -1.500H2V-5L9 0L2 5V1.500H-8Z" :transform="`translate(${a[0]} ${a[1]}) rotate(${a[2]})`" />

        <g class="labels">
          <text v-for="(t, i) in streets" :key="i" :transform="t.transform" :class="t.rank" dy=".35em" text-anchor="middle">{{ t.text }}</text>
          <text class="mid"><textPath href="#sadoveanu">Strada Mihail Sadoveanu</textPath></text>
          <text class="mid"><textPath href="#zadnipru">Petru Zadnipru Street</textPath></text>
          <text class="district" x="0" y="733">SCULEANCA</text>
          <text class="district dark-district" x="1876" y="203">RISCANI</text>
          <text v-for="p in places" :key="p.x" :class="p.cls" :text-anchor="p.anchor" :x="p.x" :y="p.y">
            <tspan v-for="(l, i) in p.lines" :key="l" :x="p.x" :y="p.y + i * 28">{{ l }}</tspan>
          </text>
        </g>

        <g v-for="p in pins" :key="p.x" :transform="`translate(${p.x} ${p.y})`">
          <path :fill="p.fill" stroke="#fff" stroke-width="2" d="M0 0C-3 -9 -19 -17 -19 -35A19 19 0 0 1 19 -35C19 -17 3 -9 0 0Z" />
          <path fill="#fff" fill-rule="evenodd" :d="p.glyph" />
        </g>
        <g class="shields">
          <rect x="2147" y="806" width="53" height="22" fill="#6c726d" />
          <text x="2173" y="824">E584</text>
          <rect x="2133" y="1081" width="53" height="22" fill="#6c726d" />
          <text x="2159" y="1099">E584</text>
          <path d="M198 1116Q211 1122 224 1116L227 1122V1136Q227 1144 211 1146Q195 1144 195 1136V1122Z" fill="#7b7f85" />
          <text x="211" y="1137">R1</text>
        </g>
        <g transform="translate(1669 986)">
          <rect x="-13" y="-13" width="26" height="26" rx="4" fill="#84888d" />
          <path fill="#fff" fill-rule="evenodd" d="M-8 -8H8V6H5V9H2V6H-2V9H-5V6H-8ZM-6 -5V0H-1V-5ZM1 -5V0H6V-5Z" />
        </g>
        <g transform="translate(1933 762)">
          <circle r="32" fill="#212123" />
          <g class="marker" transform="translate(-23 -25)" v-html="icons.pin"></g>
        </g>
      </svg>
    </main>

    <footer class="footer">
      <div class="wrap footer-main">
        <div class="footer-brand">
          <a href="#" class="logo" aria-label="Light">
            <svg viewBox="0 0 524 96"><text x="-12 95 174 323 456" y="95">LIGHT</text></svg>
          </a>
          <div class="social">
            <a v-for="s in footerSocial" :key="s.icon" href="#" :aria-label="s.label">
              <svg class="icon" viewBox="0 0 48 48" v-html="icons[s.icon]"></svg>
            </a>
          </div>
        </div>
        <section>
          <h3>Achitare și livrare</h3>
          <ul class="rows">
            <li v-for="l in footerLinks" :key="l"><a href="#">{{ l }}</a></li>
          </ul>
        </section>
        <section>
          <h3>Contacte</h3>
          <ul class="rows">
            <li v-for="r in footerInfo" :key="r.icon">
              <svg class="icon" viewBox="0 0 48 48" v-html="icons[r.icon]"></svg>
              <span>{{ r.text }}</span>
            </li>
          </ul>
        </section>
        <section>
          <h3>Abonează-te la noutăți</h3>
          <form class="subscribe" @submit.prevent>
            <input v-model="email" type="email" placeholder="Introduceți adresa de Email" aria-label="Introduceți adresa de Email" />
            <div class="radios">
              <label><input v-model="gender" type="radio" name="gender" value="f" />Femeie</label>
              <label><input v-model="gender" type="radio" name="gender" value="m" />Bărbat</label>
            </div>
            <button type="submit">Abonează-te</button>
          </form>
        </section>
      </div>
      <div class="footer-bottom">
        <div class="wrap"><a href="#">Power by beartman</a></div>
      </div>
    </footer>
  </div>
</template>

<style>
body {
  margin: 0;
  background: #fff;
}
</style>

<style scoped>
.page {
  color: #000;
  font: 400 32px/48px Lato, "Liberation Sans", sans-serif;
}
.wrap {
  width: min(2220px, calc(100% - 80px));
  margin: 0 auto;
}
a {
  color: inherit;
  text-decoration: none;
}
ul {
  margin: 0;
  padding: 0;
  list-style: none;
}
button,
input,
textarea {
  box-sizing: border-box;
  margin: 0;
  border-radius: 0;
  font: inherit;
  color: inherit;
}
button {
  cursor: pointer;
}
.icon {
  display: block;
  flex: none;
  width: 48px;
  height: 48px;
  fill: none;
  stroke: currentColor;
  stroke-width: 2;
}
.social {
  display: flex;
  gap: 48px;
}

.header {
  display: grid;
  grid-template-columns: 1fr auto 1fr;
  align-items: start;
  padding-top: 112px;
}
.header-left,
.header-right {
  padding-top: 24px;
}
.tel {
  display: block;
  margin-top: 20px;
  font-size: 29px;
  line-height: 40px;
  letter-spacing: 1px;
}
.header-right {
  display: flex;
  justify-content: flex-end;
  gap: 48px;
}
.lang {
  font: 400 35px/46px "Noto Sans", sans-serif;
}
.cart {
  position: relative;
  padding-right: 14px;
}
.badge {
  position: absolute;
  right: 0;
  bottom: -6px;
  width: 32px;
  height: 32px;
  border-radius: 50%;
  background: #000;
  color: #fff;
  font-size: 20px;
  font-weight: 700;
  line-height: 30px;
  text-align: center;
}
.logo {
  display: block;
  width: 524px;
}
.logo svg {
  display: block;
  overflow: visible;
  fill: currentColor;
  stroke: currentColor;
  stroke-width: 1;
}
.logo text {
  font: 300 130px Lato, sans-serif;
}
.nav {
  display: flex;
  justify-content: space-between;
  margin-top: 80px;
  font-weight: 600;
}
.nav button {
  display: flex;
  align-items: center;
  gap: 14px;
  padding: 0;
  border: 0;
  background: none;
}
.chevron {
  width: 24px;
  height: 24px;
  fill: none;
  stroke: #000;
  stroke-width: 2;
}

h1 {
  margin: 166px 0 0;
  padding-bottom: 38px;
  border-bottom: 2px solid #ccc;
  color: #2b2b2b;
  font-size: 62px;
  font-weight: 400;
  line-height: 80px;
  text-align: center;
}
h2 {
  margin: 0 0 64px;
  font-size: 31px;
  font-weight: 600;
  line-height: 48px;
}
.contact {
  display: grid;
  grid-template-columns: 700fr 1460fr;
  gap: 60px;
  padding: 96px 0 160px;
}
.info {
  display: flex;
  flex-direction: column;
  gap: 48px;
  font-size: 31px;
  letter-spacing: 1px;
}
.info li {
  display: flex;
  gap: 20px;
}
.info p {
  margin: 0;
}
.info span {
  display: block;
}
.form {
  display: flex;
  flex-direction: column;
  gap: 32px;
  font-size: 27px;
}
.form input,
.form textarea {
  width: 100%;
  height: 80px;
  padding: 14px 30px;
  border: 2px solid #e6e6e6;
  background: #fff;
}
.form textarea {
  display: block;
  height: 208px;
  letter-spacing: 1px;
  resize: none;
}
.form ::placeholder {
  color: #999;
  opacity: 1;
}
.form button {
  height: 80px;
  border: 0;
  background: #000;
  color: #fff;
  font-size: 28px;
  font-weight: 600;
  letter-spacing: 1px;
}

.map {
  display: block;
  width: 100%;
  height: 1360px;
}
.land { fill: #eee; }
.park { fill: #d6d9d6; }
.light { fill: #ebe9e7; }
.water { fill: #d1d6d9; }
.lines {
  fill: none;
  stroke-linecap: round;
  stroke-linejoin: round;
}
.lines path,
.lines ellipse {
  vector-effect: non-scaling-stroke;
}
.rail { stroke: #dadada; stroke-width: 3; }
.path { stroke: #8f918f; stroke-width: 2; }
.minor-case { stroke: #e2e2e2; stroke-width: 9; }
.minor { stroke: #fff; stroke-width: 6; }
.major { stroke: #fff; stroke-width: 12; }
.avenue { stroke: #fff; stroke-width: 16; }
.dash { stroke: #8f918f; stroke-width: 2; stroke-dasharray: 8 5; stroke-linecap: butt; }
.highway-case { stroke: #b0b0a9; stroke-width: 18; stroke-linecap: butt; }
.highway { stroke: #d9d9d2; stroke-width: 13; stroke-linecap: butt; }
.island { fill: #d6d6d6; stroke: #b5b5ae; stroke-width: 2; }
.island.open { fill: #f2f2f2; }
.arrow { fill: #a5a5a5; }
.labels text {
  font-family: Roboto, sans-serif;
  paint-order: stroke;
  stroke: #f6f6f6;
  stroke-width: 5;
  stroke-linejoin: round;
}
.soft { fill: #858787; font-size: 18px; }
.tiny { fill: #858787; font-size: 17px; }
.river { fill: #858787; font-size: 24px; }
.mid { fill: #666868; font-size: 22px; }
.dark { fill: #2f3030; font-size: 25px; }
.place { fill: #6b6e6d; font-size: 28px; }
.place.small { font-size: 22px; }
.place.station { font-size: 26px; }
.place.bold { fill: #454846; }
.place.rose { fill: #837b7b; }
.district {
  fill: #8f9191;
  font-size: 28px;
  font-weight: 700;
  letter-spacing: 9px;
}
.dark-district {
  fill: #6b6d6d;
  font-size: 26px;
  letter-spacing: 5px;
}
.shields text {
  fill: #fff;
  font: 700 19px Roboto, sans-serif;
  text-anchor: middle;
}
.marker {
  fill: none;
  stroke: #fff;
  stroke-width: 2;
}

.footer {
  margin-top: 240px;
  background: #000;
  color: #999;
}
.footer-main {
  display: grid;
  grid-template-columns: repeat(4, 1fr);
  gap: 60px;
  padding: 80px 0;
}
.footer-brand {
  display: flex;
  flex-direction: column;
  justify-content: space-between;
}
.footer-brand .logo {
  width: 348px;
}
h3 {
  margin: 0 0 42px;
  font-size: 32px;
  font-weight: 600;
  line-height: 48px;
  letter-spacing: 1px;
}
.rows {
  display: flex;
  flex-direction: column;
  gap: 24px;
  font-size: 29px;
}
.rows li {
  display: flex;
  gap: 16px;
}
.subscribe {
  display: flex;
  flex-direction: column;
  gap: 32px;
  font-size: 28px;
}
.subscribe > input {
  width: 100%;
  height: 66px;
  padding: 0 0 16px;
  border: 0;
  border-bottom: 2px solid #3d3d3d;
  background: none;
  font-size: 29px;
}
.subscribe > input::placeholder {
  color: #5a5a5a;
  opacity: 1;
}
.radios {
  display: flex;
  gap: 38px;
}
.radios label {
  display: flex;
  align-items: center;
  gap: 24px;
  padding-left: 8px;
}
.radios input {
  appearance: none;
  width: 32px;
  height: 32px;
  border: 2px solid #999;
  border-radius: 50%;
}
.radios input:checked {
  background: radial-gradient(circle, #999 0 9px, transparent 10px);
}
.subscribe button {
  height: 80px;
  border: 2px solid #999;
  background: none;
}
.footer-bottom {
  padding: 31px 0;
  border-top: 2px solid #3d3d3d;
  text-align: right;
}
</style>
